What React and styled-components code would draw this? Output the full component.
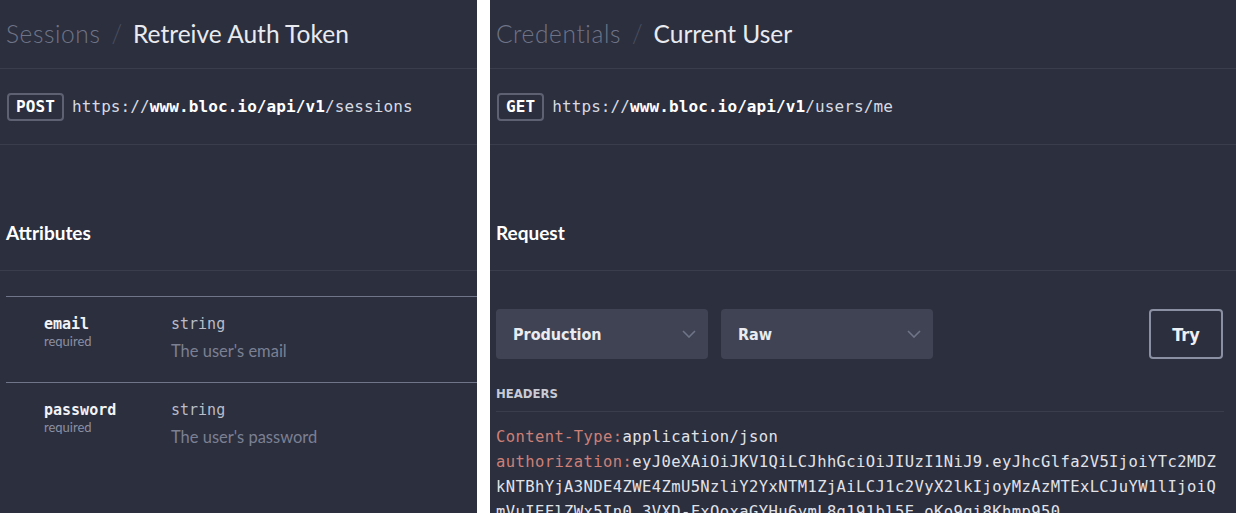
import React from "react";
import styled, { createGlobalStyle } from "styled-components";

const GlobalStyle = createGlobalStyle`
  html, body {
    margin: 0;
    padding: 0;
    background: #ffffff;
    overflow: hidden;
  }
  * { box-sizing: border-box; }
`;

const mono = `"DejaVu Sans Mono", "Liberation Mono", monospace`;
const sans = `Lato, "Open Sans", sans-serif`;
const condensed = `"DejaVu Sans Condensed", "DejaVu Sans", sans-serif`;

const Page = styled.div`
  display: grid;
  grid-template-columns: 477px 1fr;
  column-gap: 13px;
  height: 513px;
  overflow: hidden;
`;

const Panel = styled.section`
  background: #2c2f3e;
  height: 513px;
  overflow: hidden;
  display: flex;
  flex-direction: column;
`;

const Header = styled.div`
  height: 69px;
  flex-shrink: 0;
  display: flex;
  align-items: center;
  padding: 0 6px 2px;
  border-bottom: 1px solid #393d4c;
  font-family: ${sans};
  font-size: 24.5px;
  white-space: nowrap;
`;

const Crumb = styled.span`
  color: #6f7487;
  font-weight: 300;
  letter-spacing: 0.6px;
`;

const Slash = styled.span`
  color: #4a4f61;
  margin: 0 11px;
  font-weight: 300;
`;

const Current = styled.span`
  color: #e8eaf0;
`;

const UrlRow = styled.div`
  height: 76px;
  flex-shrink: 0;
  display: flex;
  align-items: center;
  gap: 8px;
  padding: 0 7px;
  border-bottom: 1px solid #393d4c;
  font-family: ${mono};
  font-size: 16px;
  letter-spacing: 0.1px;
  color: #d7dae2;
  white-space: nowrap;
`;

const Method = styled.span`
  display: inline-flex;
  align-items: center;
  justify-content: center;
  height: 28px;
  padding: 0 7px;
  border: 2px solid #5d6172;
  border-radius: 4px;
  color: #ffffff;
  font-weight: bold;
  font-size: 16px;
`;

const Strong = styled.b`
  color: #ffffff;
`;

const SectionTitle = styled.div`
  height: 126px;
  flex-shrink: 0;
  display: flex;
  align-items: flex-end;
  padding: 0 6px 25px;
  border-bottom: 1px solid #393d4c;
  font-family: ${sans};
  font-weight: bold;
  font-size: 19px;
  line-height: 24px;
  color: #ffffff;
`;

const AttrList = styled.div`
  margin: 25px 0 0 6px;
  border-top: 1px solid #717589;
`;

const AttrRow = styled.div`
  height: 86px;
  display: grid;
  grid-template-columns: 127px 1fr;
  padding: 18px 0 0 38px;
  border-bottom: 1px solid ${(p) => (p.last ? "transparent" : "#717589")};
`;

const AttrName = styled.div`
  font-family: ${mono};
  font-weight: bold;
  font-size: 15px;
  line-height: 18px;
  color: #f2f3f7;
`;

const Required = styled.div`
  font-family: ${sans};
  font-size: 13px;
  line-height: 16px;
  color: #8b90a2;
`;

const AttrType = styled.div`
  font-family: ${mono};
  font-size: 15px;
  line-height: 18px;
  color: #b9bdc9;
`;

const AttrDesc = styled.div`
  margin-top: 8px;
  font-family: ${sans};
  font-size: 16.5px;
  line-height: 20px;
  color: #7b8093;
`;

const Controls = styled.div`
  display: flex;
  align-items: center;
  gap: 13px;
  margin-top: 38px;
  padding: 0 13px 0 6px;
`;

const Select = styled.div`
  width: 212px;
  height: 50px;
  display: flex;
  align-items: center;
  justify-content: space-between;
  padding: 0 12px 0 17px;
  background: #3f4353;
  border-radius: 4px;
  font-family: ${condensed};
  font-weight: bold;
  font-size: 16px;
  color: #e9ebf1;
`;

const TryButton = styled.div`
  margin-left: auto;
  width: 74px;
  height: 50px;
  display: flex;
  align-items: center;
  justify-content: center;
  border: 2px solid #8b90a2;
  border-radius: 4px;
  font-family: ${condensed};
  font-weight: bold;
  font-size: 18px;
  color: #eef0f5;
`;

const Label = styled.div`
  margin: 26px 12px 0 6px;
  padding-bottom: 9px;
  border-bottom: 1px solid #393d4c;
  font-family: ${condensed};
  font-weight: bold;
  font-size: 13px;
  line-height: 17px;
  color: #c8cbd5;
`;

const Code = styled.div`
  padding: 13px 0 0 6px;
  font-family: ${mono};
  font-size: 15.5px;
  letter-spacing: 0.4px;
  line-height: 25px;
  color: #e1e3ea;
  white-space: pre;
`;

const Key = styled.span`
  color: #cd8077;
`;

const Chevron = () => (
  <svg width="14" height="8" viewBox="0 0 14 8" fill="none">
    <polyline points="1,1 7,7 13,1" stroke="#6f7487" strokeWidth="1.6" />
  </svg>
);

const Url = ({ method, path }) => (
  <UrlRow>
    <Method>{method}</Method>
    <span>
      https://<Strong>www.bloc.io/api/v1</Strong>/{path}
    </span>
  </UrlRow>
);

const attributes = [
  { name: "email", type: "string", desc: "The user's email" },
  { name: "password", type: "string", desc: "The user's password" },
];

const tokenLines = [
  "kNTBhYjA3NDE4ZWE4ZmU5NzliY2YxNTM1ZjAiLCJ1c2VyX2lkIjoyMzAzMTExLCJuYW1lIjoiQ",
  "mVuIEFlZWx5In0.3VXD-FxOoxaGYHu6ymL8g191bl5E_oKo9gi8Khmp950",
];

const App = () => {
  return (
    <>
      <GlobalStyle />
      <Page>
        <Panel>
          <Header>
            <Crumb>Sessions</Crumb>
            <Slash>/</Slash>
            <Current>Retreive Auth Token</Current>
          </Header>
          <Url method="POST" path="sessions" />
          <SectionTitle>Attributes</SectionTitle>
          <AttrList>
            {attributes.map((a, i) => (
              <AttrRow key={a.name} last={i === attributes.length - 1}>
                <div>
                  <AttrName>{a.name}</AttrName>
                  <Required>required</Required>
                </div>
                <div>
                  <AttrType>{a.type}</AttrType>
                  <AttrDesc>{a.desc}</AttrDesc>
                </div>
              </AttrRow>
            ))}
          </AttrList>
        </Panel>

        <Panel>
          <Header>
            <Crumb>Credentials</Crumb>
            <Slash>/</Slash>
            <Current>Current User</Current>
          </Header>
          <Url method="GET" path="users/me" />
          <SectionTitle>Request</SectionTitle>
          <Controls>
            <Select>
              Production <Chevron />
            </Select>
            <Select>
              Raw <Chevron />
            </Select>
            <TryButton>Try</TryButton>
          </Controls>
          <Label>HEADERS</Label>
          <Code>
            <div>
              <Key>Content-Type:</Key>application/json
            </div>
            <div>
              <Key>authorization:</Key>
              eyJ0eXAiOiJKV1QiLCJhhGciOiJIUzI1NiJ9.eyJhcGlfa2V5IjoiYTc2MDZ
            </div>
            {tokenLines.map((l) => (
              <div key={l}>{l}</div>
            ))}
          </Code>
        </Panel>
      </Page>
    </>
  );
};

export default App;
